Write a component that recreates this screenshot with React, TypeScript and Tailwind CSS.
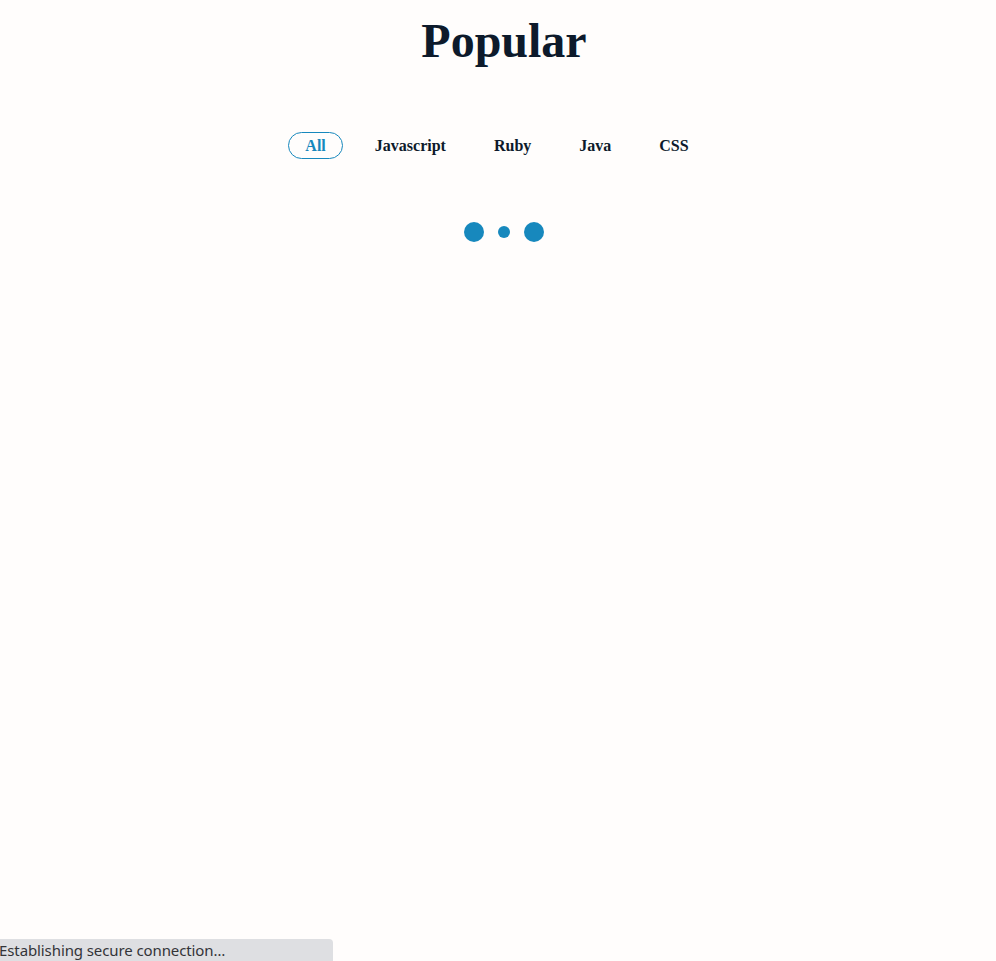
import React from "react";

const langs = ["All", "Javascript", "Ruby", "Java", "CSS"];

export default function App() {
  return (
    <div className="relative min-h-[961px] w-full bg-[#fffdfc] text-[#0d1a2b]" style={{ fontFamily: '"Liberation Serif", "Times New Roman", serif' }}>
      <h1 className="pt-[5px] pl-3 text-center text-[48px] leading-normal font-bold">Popular</h1>
      <ul className="mt-[55px] flex justify-center gap-4 pr-[3px]">
        {langs.map((l) => (
          <li
            key={l}
            className={
              l === "All"
                ? "rounded-full border border-[#1788bd] px-4 py-[3px] text-[16px] leading-[19px] font-bold text-[#1788bd]"
                : "px-4 py-[4px] text-[16px] leading-[19px] font-bold"
            }
          >
            {l}
          </li>
        ))}
      </ul>
      <div className="mt-[63px] flex items-center justify-center gap-[14px] pl-3">
        <span className="h-5 w-5 rounded-full bg-[#1788bd]" />
        <span className="h-3 w-3 rounded-full bg-[#1788bd]" />
        <span className="h-5 w-5 rounded-full bg-[#1788bd]" />
      </div>
      <div
        className="absolute bottom-0 left-0 flex h-[22px] w-[333px] items-center rounded-tr-[4px] bg-[#dedfe2] text-[15px] text-[#333438]"
        style={{ fontFamily: '"Noto Sans", "DejaVu Sans", sans-serif' }}
      >
        <span className="-ml-[1px] tracking-[-0.1px]">Establishing secure connection…</span>
      </div>
    </div>
  );
}
